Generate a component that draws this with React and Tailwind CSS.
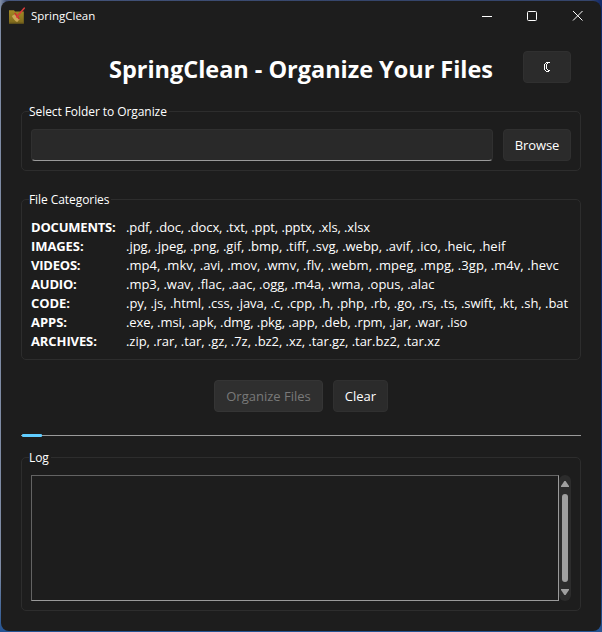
import React from 'react';

const categories = [
  ['DOCUMENTS:', '.pdf, .doc, .docx, .txt, .ppt, .pptx, .xls, .xlsx', 'tracking-[-0.2px]', 'tracking-[-0.1px]'],
  ['IMAGES:', '.jpg, .jpeg, .png, .gif, .bmp, .tiff, .svg, .webp, .avif, .ico, .heic, .heif', 'tracking-[-0.08px]', 'tracking-[-0.02px]'],
  ['VIDEOS:', '.mp4, .mkv, .avi, .mov, .wmv, .flv, .webm, .mpeg, .mpg, .3gp, .m4v, .hevc', 'tracking-[-0.22px]', 'tracking-[0.05px]'],
  ['AUDIO:', '.mp3, .wav, .flac, .aac, .ogg, .m4a, .wma, .opus, .alac', 'tracking-[-0.2px]', 'tracking-[-0.02px]'],
  ['CODE:', '.py, .js, .html, .css, .java, .c, .cpp, .h, .php, .rb, .go, .rs, .ts, .swift, .kt, .sh, .bat', 'tracking-[-0.1px]', 'tracking-[-0.035px]'],
  ['APPS:', '.exe, .msi, .apk, .dmg, .pkg, .app, .deb, .rpm, .jar, .war, .iso', 'tracking-[-0.05px]', 'tracking-[-0.075px]'],
  ['ARCHIVES:', '.zip, .rar, .tar, .gz, .7z, .bz2, .xz, .tar.gz, .tar.bz2, .tar.xz', 'tracking-[-0.1px]', 'tracking-[-0.055px]'],
];

function Group({ title, className, children }) {
  return (
    <section className={`relative rounded-[5px] border border-[#2d2d2d] px-[9px] ${className}`}>
      <h2 className="absolute left-[7px] top-[-9px] whitespace-nowrap bg-[#1d1d1d] pr-0.5 text-[12px] leading-[18px] tracking-[-0.07px]">
        {title}
      </h2>
      {children}
    </section>
  );
}

function Button({ className, children, ...props }) {
  return (
    <button
      className={`flex h-8 shrink-0 items-center justify-center whitespace-nowrap rounded-[4px] border text-[13px] leading-[18px] ${className}`}
      {...props}
    >
      {children}
    </button>
  );
}

function AppIcon() {
  return (
    <svg width="18" height="18" viewBox="0 0 18 18" className="shrink-0">
      <defs>
        <linearGradient id="folder" x1="0" y1="0" x2="0" y2="1">
          <stop offset="0" stopColor="#a48b24" />
          <stop offset="1" stopColor="#7c681c" />
        </linearGradient>
      </defs>
      <path d="M1 3.2h5l1 1.3h8.8v12H1z" fill="url(#folder)" />
      <path d="M1 15.5h14.8v1H1z" fill="#6d5a1a" />
      <path d="M3.8 9 7.2 7l4.4 5.2-2.4 2.8c-1.900-.8-4-3-5.400-6z" fill="#c9a657" />
      <path d="m6.600 6 4.600 6" stroke="#c8312f" strokeWidth="1.4" />
      <path d="m8.800 9.800 7.400-8.600" stroke="#d83b3a" strokeWidth="1.6" strokeLinecap="round" />
    </svg>
  );
}

export default function App() {
  return (
    <div className="h-[632px] w-[602px] overflow-hidden bg-[linear-gradient(90deg,#8390a8_0%,#46567c_1%,#35456b_60%,#35456b_98%,#10286a_100%)] font-['Open_Sans','Noto_Sans',sans-serif] text-white">
      <div className="flex h-full flex-col bg-[linear-gradient(180deg,transparent_90%,#255493_100%)] p-px">
        <main className="flex flex-1 flex-col rounded-[8px] bg-[#1d1d1d]">
          <header className="flex h-[30px] items-center pl-[7px]">
            <AppIcon />
            <span className="ml-[5px] text-[11.5px] leading-4">SpringClean</span>
            <svg className="ml-auto mr-[18px]" width="102" height="12" viewBox="0 0 102 12" fill="none" stroke="#fff">
              <path d="M1 6.5h10" />
              <rect x="46.5" y="1.5" width="9" height="9" rx="1" />
              <path d="m92 1 9.5 9.5m0-9.5L92 10.500" />
            </svg>
          </header>

          <div className="flex flex-col px-5 pt-5">
            <div className="flex h-8 items-center justify-end pr-2.5">
              <h1 className="mr-[30px] whitespace-nowrap pt-[3px] text-[23.5px] font-bold leading-8 tracking-[-0.03px]">
                SpringClean - Organize Your Files
              </h1>
              <Button className="w-12 border-[#303030] bg-[#2b2b2b]" aria-label="Toggle theme">
                <svg width="8" height="12" viewBox="0 0 8 12" fill="none" stroke="#fff" shapeRendering="crispEdges">
                  <path d="M3 1.500h4M2 2.500h1M4 2.500h1M1 3.500h1M3 3.500h1M1 4.500h1M3 4.500h1M1 5.500h1M3 5.500h1M1 6.500h1M3 6.500h1M1 7.500h1M3 7.500h1M1 8.500h1M4 8.500h1M2 9.500h1M5 9.500h2M3 10.500h3" />
                </svg>
              </Button>
            </div>

            <Group title="Select Folder to Organize" className="mt-7 h-[60px] pt-[17px]">
              <div className="flex gap-2.5">
                <input className="h-8 min-w-0 flex-1 rounded-[4px] border border-[#303030] border-b-[#9a9a9a] bg-[#292929] px-2 text-[13px] outline-none" />
                <Button className="w-[68px] border-[#303030] bg-[#2b2b2b] tracking-[-0.1px]">Browse</Button>
              </div>
            </Group>

            <Group title="File Categories" className="mt-7 h-[161px] pt-[18px]">
              <dl className="grid grid-cols-[95px_1fr] text-[13px] leading-[19px]">
                {categories.map(([name, list, nameTracking, listTracking]) => (
                  <React.Fragment key={name}>
                    <dt className={`whitespace-nowrap font-bold ${nameTracking}`}>{name}</dt>
                    <dd className={`whitespace-nowrap ${listTracking}`}>{list}</dd>
                  </React.Fragment>
                ))}
              </dl>
            </Group>

            <div className="mt-5 flex justify-center gap-2.5">
              <Button disabled className="w-[109px] border-[#353535] bg-[#2f2f2f] text-[#797979]">Organize Files</Button>
              <Button className="w-[55px] border-[#303030] bg-[#2b2b2b]">Clear</Button>
            </div>

            <div className="mt-[22px] flex h-[3px] items-center bg-[linear-gradient(180deg,transparent_1px,#9a9a9a_1px,#9a9a9a_2px,transparent_2px)] pl-px">
              <div className="h-[3px] w-5 rounded-[1px] bg-[#60cdff]" />
            </div>

            <Group title="Log" className="mt-5 h-[154px] pt-[17px]">
              <div className="flex h-[126px]">
                <div className="flex-1 border border-[#9a9a9a] border-l-[#636363] border-t-[#636363]" />
                <div className="flex w-3 flex-col items-center rounded-[6px] bg-[#2c2c2c] py-[6px]">
                  <svg width="8" height="6" viewBox="0 0 8 6" fill="#a0a0a0"><path d="M3.400 0h1.200L8 5v1H0V5z" /></svg>
                  <div className="my-[7px] w-1.5 flex-1 rounded-full bg-[#a0a0a0]" />
                  <svg width="8" height="6" viewBox="0 0 8 6" fill="#a0a0a0"><path d="M3.400 6h1.200L8 1V0H0v1z" /></svg>
                </div>
              </div>
            </Group>
          </div>
        </main>
      </div>
    </div>
  );
}
